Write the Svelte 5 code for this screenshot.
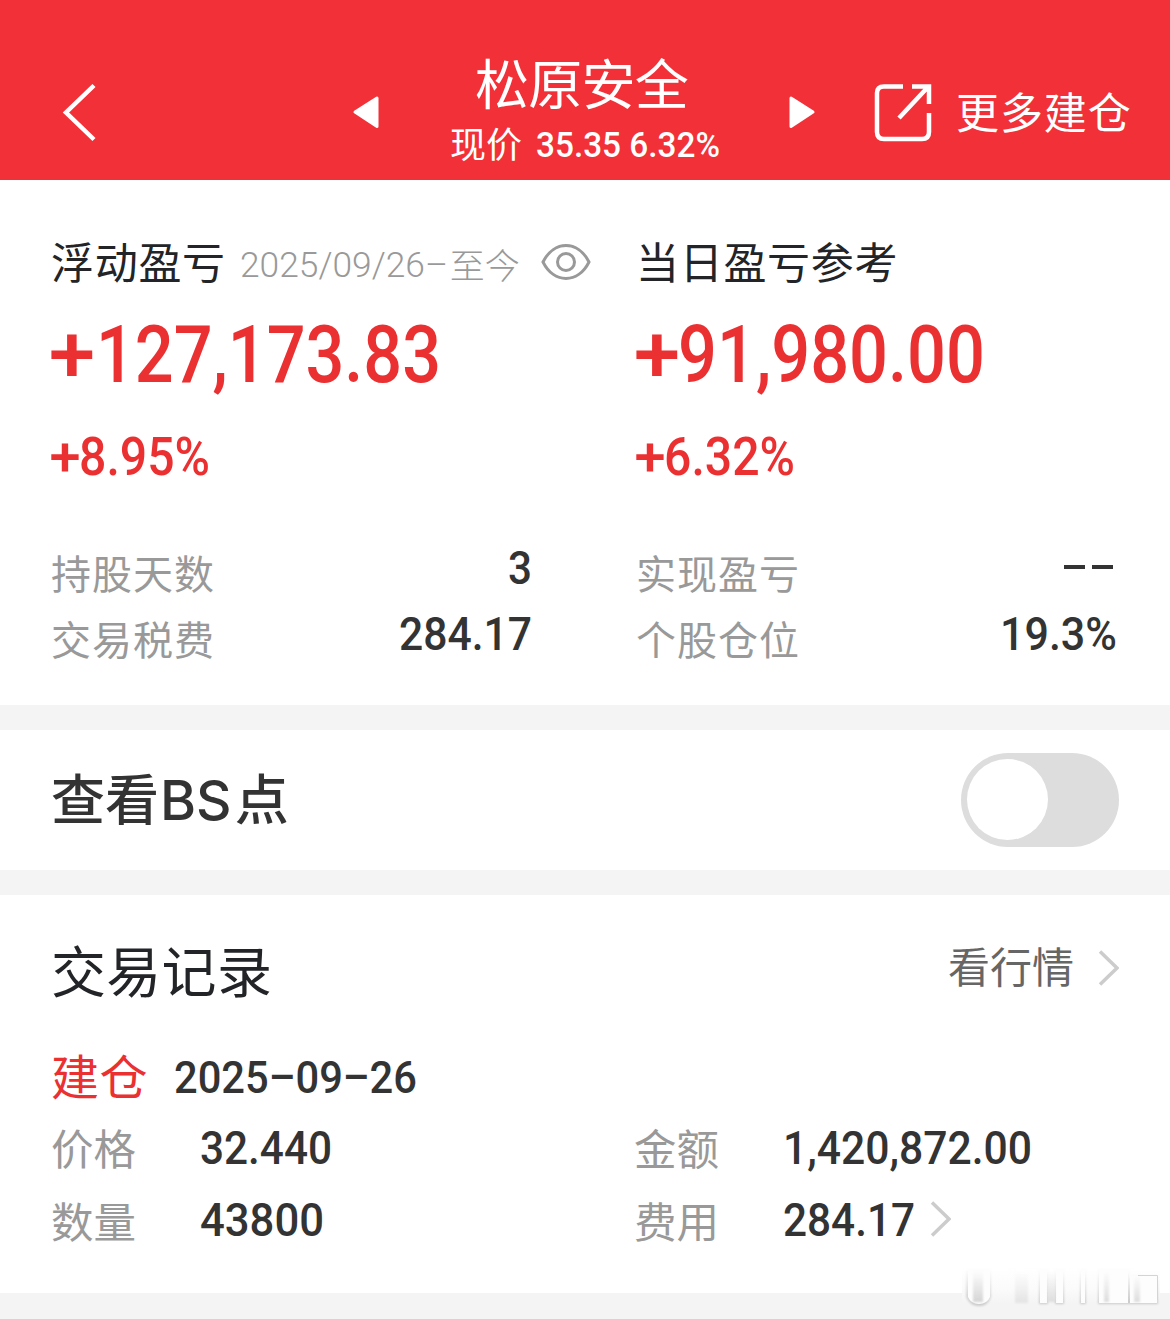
<script lang="ts">
	// sign: width taken by the leading plus, the digits follow after it
	type Figure = { text: string; width: number; cap: number; sign?: number };

	const stock = { name: '松原安全', priceLabel: '现价' };
	const price: Figure = { text: '35.35 6.32%', width: 184, cap: 25 };

	const floating = {
		amount: { text: '127,173.83', width: 390, cap: 56, sign: 45 },
		rate: { text: '8.95%', width: 159, cap: 37.5, sign: 28 },
		rows: [
			{ label: '持股天数', value: { text: '3', width: 24, cap: 33 } },
			{ label: '交易税费', value: { text: '284.17', width: 133, cap: 33 } }
		]
	};

	const today = {
		amount: { text: '91,980.00', width: 349, cap: 56, sign: 42 },
		rate: { text: '6.32%', width: 159, cap: 37.5, sign: 28 },
		rows: [
			{ label: '实现盈亏', value: null },
			{ label: '个股仓位', value: { text: '19.3%', width: 117, cap: 33 } }
		]
	};

	const openDate: Figure = { text: '2025–09–26', width: 243, cap: 31.5 };
	const record = [
		{ label: '价格', value: { text: '32.440', width: 132, cap: 33 }, more: false },
		{ label: '金额', value: { text: '1,420,872.00', width: 249, cap: 33 }, more: false },
		{ label: '数量', value: { text: '43800', width: 124, cap: 33 }, more: false },
		{ label: '费用', value: { text: '284.17', width: 132, cap: 33 }, more: true }
	];

	let showPoints = $state(false);
</script>

{#snippet figure(f: Figure)}
	<svg class="figure" width={f.width} height={f.cap}>
		{#if f.sign}
			<text
				x={-f.cap / 24}
				y={f.cap}
				font-size={f.cap / 0.711}
				textLength={f.cap * 0.83}
				lengthAdjust="spacingAndGlyphs">+</text
			>
		{/if}
		<text
			x={f.sign ?? 0}
			y={f.cap}
			font-size={f.cap / 0.711}
			textLength={f.width - (f.sign ?? 0)}
			lengthAdjust="spacingAndGlyphs">{f.text}</text
		>
	</svg>
{/snippet}

{#snippet chevron()}
	<svg class="chevron" width="22" height="38" viewBox="0 0 22 38">
		<path d="M3 2.500 L20 19 L3 35.500" />
	</svg>
{/snippet}

<div class="page">
	<header>
		<button class="back" aria-label="back">
			<svg width="36" height="60" viewBox="0 0 36 60">
				<path d="M33 3.500 L5 30.500 L33 57.500" />
			</svg>
		</button>
		<button class="arrow prev" aria-label="previous">
			<svg width="28" height="34" viewBox="0 0 28 34">
				<path d="M3 17 L25 3 V31.500 Z" />
			</svg>
		</button>
		<div class="title">
			<h1>{stock.name}</h1>
			<div class="price">
				<span>{stock.priceLabel}</span>
				{@render figure(price)}
			</div>
		</div>
		<button class="arrow next" aria-label="next">
			<svg width="28" height="34" viewBox="0 0 28 34">
				<path d="M25 17 L3 3 V31.500 Z" />
			</svg>
		</button>
		<button class="more">
			<svg width="60" height="60" viewBox="0 0 60 60">
				<path d="M30 4.500 H11 Q4 4.500 4 11 V50 Q4 57 11 57 H49 Q56 57 56 50 V31" />
				<path d="M39 4.500 H56 V22 M55 5 L26 36" />
			</svg>
			<span>更多建仓</span>
		</button>
	</header>

	<section class="profit">
		<div class="column">
			<div class="heading">
				<span>浮动盈亏</span>
				<span class="range"><svg class="figure light" width="208" height="25"><text x="0" y="26" font-size="34.500" textLength="208" lengthAdjust="spacingAndGlyphs">2025/09/26–</text></svg>至今</span>
				<svg class="eye" width="50" height="38" viewBox="0 0 50 38">
					<path d="M2 19 C13 -3 37 -3 48 19 C37 41 13 41 2 19 Z" />
					<circle cx="25" cy="19" r="8.500" />
				</svg>
			</div>
			<div class="amount">{@render figure(floating.amount)}</div>
			<div class="rate">{@render figure(floating.rate)}</div>
			{#each floating.rows as row}
				<div class="row">
					<span>{row.label}</span>
					{@render figure(row.value)}
				</div>
			{/each}
		</div>
		<div class="column">
			<div class="heading"><span>当日盈亏参考</span></div>
			<div class="amount">{@render figure(today.amount)}</div>
			<div class="rate">{@render figure(today.rate)}</div>
			{#each today.rows as row}
				<div class="row">
					<span>{row.label}</span>
					{#if row.value}
						{@render figure(row.value)}
					{:else}
						<span class="empty"><i></i><i></i></span>
					{/if}
				</div>
			{/each}
		</div>
	</section>

	<section class="points">
		<h2>查看<span class="latin">BS</span>点</h2>
		<button
			class="toggle"
			class:on={showPoints}
			aria-label="查看BS点"
			onclick={() => (showPoints = !showPoints)}
		>
			<span class="knob"></span>
		</button>
	</section>

	<section class="records">
		<div class="records-head">
			<h2>交易记录</h2>
			<span class="quote">看行情</span>
			{@render chevron()}
		</div>
		<div class="opened">
			<span>建仓</span>
			{@render figure(openDate)}
		</div>
		<div class="details">
			{#each record as item}
				<div class="detail">
					<span>{item.label}</span>
					{@render figure(item.value)}
					{#if item.more}
						{@render chevron()}
					{/if}
				</div>
			{/each}
		</div>
	</section>

	<svg class="watermark" width="206" height="52" viewBox="0 0 206 52">
		<defs>
			<linearGradient id="haze" x1="0" y1="0" x2="0" y2="1">
				<stop offset="0" stop-color="#fff" />
				<stop offset="0.600" stop-color="#fbfbfb" />
				<stop offset="1" stop-color="#f4f4f4" />
			</linearGradient>
			<linearGradient id="shade" x1="0" y1="0" x2="0" y2="1">
				<stop offset="0" stop-color="#d8d8d8" stop-opacity="0" />
				<stop offset="1" stop-color="#d4d4d4" />
			</linearGradient>
			<linearGradient id="edge" x1="0" y1="0" x2="0" y2="1">
				<stop offset="0" stop-color="#ccc" stop-opacity="0" />
				<stop offset="1" stop-color="#c8c8c8" />
			</linearGradient>
			<filter id="soft"><feGaussianBlur stdDeviation="1.200" /></filter>
		</defs>
		<rect x="2" y="8" width="198" height="36" fill="url(#haze)" />
		<g fill="url(#edge)" filter="url(#soft)">
			<path d="M6 10 V38 Q10 47 19 47 Q28 47 31 38 V10 Z" />
			<rect x="79" y="10" width="9" height="35" />
			<rect x="95" y="10" width="9" height="35" />
			<rect x="120" y="10" width="6" height="35" />
			<rect x="138" y="10" width="31" height="35" />
			<rect x="169" y="16" width="29" height="29" />
		</g>
		<g fill="#fdfdfd">
			<path d="M8 10 V38 Q11 45 19 45 Q27 45 30 38 V10 Z" />
			<rect x="80" y="10" width="7" height="34" />
			<rect x="96" y="10" width="7" height="34" />
			<rect x="121" y="10" width="4" height="34" />
			<rect x="139" y="10" width="29" height="34" />
			<rect x="170" y="17" width="27" height="27" />
		</g>
		<g fill="url(#shade)" filter="url(#soft)">
			<rect x="13" y="12" width="10" height="31" />
			<rect x="55" y="12" width="13" height="32" opacity="0.500" />
			<rect x="88" y="12" width="7" height="31" opacity="0.700" />
			<rect x="144" y="12" width="5" height="31" opacity="0.800" />
			<rect x="174" y="17" width="6" height="26" opacity="0.800" />
		</g>
		<path d="M178 16.500 H197.500 V41" fill="none" stroke="#d4d4d4" />
	</svg>
</div>

<style>
	:global(body) {
		margin: 0;
	}

	.page {
		position: relative;
		width: 1170px;
		height: 1319px;
		overflow: hidden;
		background: #f4f4f4;
		color: #222427;
		font-family: 'Noto Sans CJK SC', sans-serif;
		line-height: 1;
	}

	h1,
	h2 {
		margin: 0;
		font-weight: 400;
	}

	span {
		white-space: nowrap;
	}

	button {
		padding: 0;
		border: 0;
		background: none;
		color: inherit;
		font: inherit;
		cursor: pointer;
	}

	svg {
		display: block;
		flex: none;
	}

	.figure {
		overflow: visible;
		fill: currentColor;
		font-family: Roboto, sans-serif;
		font-weight: 500;
	}

	.figure.light {
		font-weight: 300;
	}

	header {
		display: flex;
		height: 180px;
		background: #f23038;
		color: #fff;
	}

	.back {
		height: 60px;
		margin: 82px 0 0 61px;
	}

	.back path {
		fill: none;
		stroke: #fff;
		stroke-width: 4.5;
	}

	.arrow {
		height: 34px;
		margin-top: 95px;
	}

	.arrow path {
		fill: #fff;
		stroke: #fff;
		stroke-width: 3;
		stroke-linejoin: round;
	}

	.prev {
		margin-left: 255px;
	}

	.title {
		display: flex;
		flex-direction: column;
		align-items: center;
		width: 408px;
		padding-top: 55px;
		box-sizing: border-box;
	}

	h1 {
		padding-right: 5px;
		font-size: 54px;
		letter-spacing: -0.7px;
	}

	.price {
		display: flex;
		align-items: center;
		gap: 14px;
		margin: 15px 0 0 2px;
		font-size: 36px;
	}

	.price span {
		padding-bottom: 3px;
	}

	.price .figure {
		margin-top: 1px;
	}

	.more {
		display: flex;
		align-items: center;
		gap: 23px;
		height: 60px;
		margin: 82px 0 0 57px;
		font-size: 43px;
		letter-spacing: 0.9px;
	}

	.more span {
		padding-bottom: 4px;
	}

	.more path {
		fill: none;
		stroke: #fff;
		stroke-width: 4.5;
	}

	.profit {
		display: grid;
		grid-template-columns: 585px 585px;
		height: 525px;
		background: #fff;
	}

	.column {
		padding: 57px 53px 0 51px;
	}

	.heading {
		display: flex;
		align-items: center;
		height: 50px;
		font-size: 43px;
		letter-spacing: 0.7px;
	}

	.heading > span:first-child {
		padding-bottom: 4px;
	}

	.range {
		display: flex;
		align-items: center;
		gap: 2px;
		margin: 3px 0 0 14px;
		color: #999;
		font-size: 35px;
		font-weight: 300;
		letter-spacing: 0;
	}

	.eye {
		margin-left: 21px;
		fill: none;
		stroke: #999;
		stroke-width: 3;
	}

	.amount {
		height: 56px;
		margin-top: 39px;
		color: #eb3032;
	}

	.rate {
		height: 38px;
		margin: 55px 0 65px;
		color: #eb3032;
	}

	.row {
		display: flex;
		align-items: center;
		justify-content: space-between;
		height: 66px;
		color: #999;
		font-size: 40px;
		letter-spacing: 1px;
	}

	.row > span:first-child {
		padding-bottom: 3px;
	}

	.row .figure {
		margin-bottom: 11px;
		color: #333;
		letter-spacing: 0;
	}

	.row .empty {
		display: flex;
		gap: 7px;
		margin: 0 4px 12px 0;
	}

	.empty i {
		width: 21px;
		height: 4px;
		background: #333;
	}

	.points {
		display: flex;
		align-items: center;
		justify-content: space-between;
		height: 140px;
		margin-top: 25px;
		padding: 0 51px;
		background: #fff;
	}

	.points h2 {
		padding-bottom: 3px;
		font-size: 54px;
		font-weight: 500;
		color: #333;
	}

	.latin {
		margin: 0 3px 0 1px;
		font-family: Inter, sans-serif;
		font-size: 55px;
	}

	.toggle {
		display: flex;
		width: 158px;
		height: 94px;
		padding: 6px;
		border-radius: 47px;
		background: #ddd;
	}

	.toggle.on {
		justify-content: flex-end;
		background: #f23038;
	}

	.knob {
		width: 81px;
		height: 81px;
		border-radius: 50%;
		background: #fff;
	}

	.records {
		height: 398px;
		margin-top: 25px;
		padding: 0 51px;
		box-sizing: border-box;
		background: #fff;
	}

	.records-head {
		display: flex;
		align-items: center;
		height: 152px;
	}

	.records-head h2 {
		flex: 1;
		padding-bottom: 5px;
		font-size: 55px;
		letter-spacing: 0.3px;
	}

	.quote {
		margin: 0 23px 12px 0;
		color: #666;
		font-size: 42px;
	}

	.chevron path {
		fill: none;
		stroke: #ccc;
		stroke-width: 3.5;
	}

	.records-head .chevron {
		margin-bottom: 6px;
	}

	.opened {
		display: flex;
		align-items: center;
		gap: 26px;
		height: 58px;
		color: #eb3032;
		font-size: 48px;
		letter-spacing: 0.5px;
	}

	.opened span {
		padding-bottom: 5px;
	}

	.opened .figure {
		margin-top: 1px;
		color: #333;
		letter-spacing: 0;
	}

	.details {
		display: grid;
		grid-template-columns: 583px auto;
		grid-auto-rows: 72.5px;
		margin-top: 8px;
	}

	.detail {
		display: flex;
		align-items: center;
		color: #999;
		font-size: 42.5px;
	}

	.detail > span {
		width: 149px;
		padding-bottom: 4px;
	}

	.detail .figure {
		margin-bottom: 4px;
		color: #333;
	}

	.detail .chevron {
		margin: 0 0 5px 14px;
	}

	.watermark {
		position: absolute;
		right: 4px;
		bottom: 8px;
	}
</style>
